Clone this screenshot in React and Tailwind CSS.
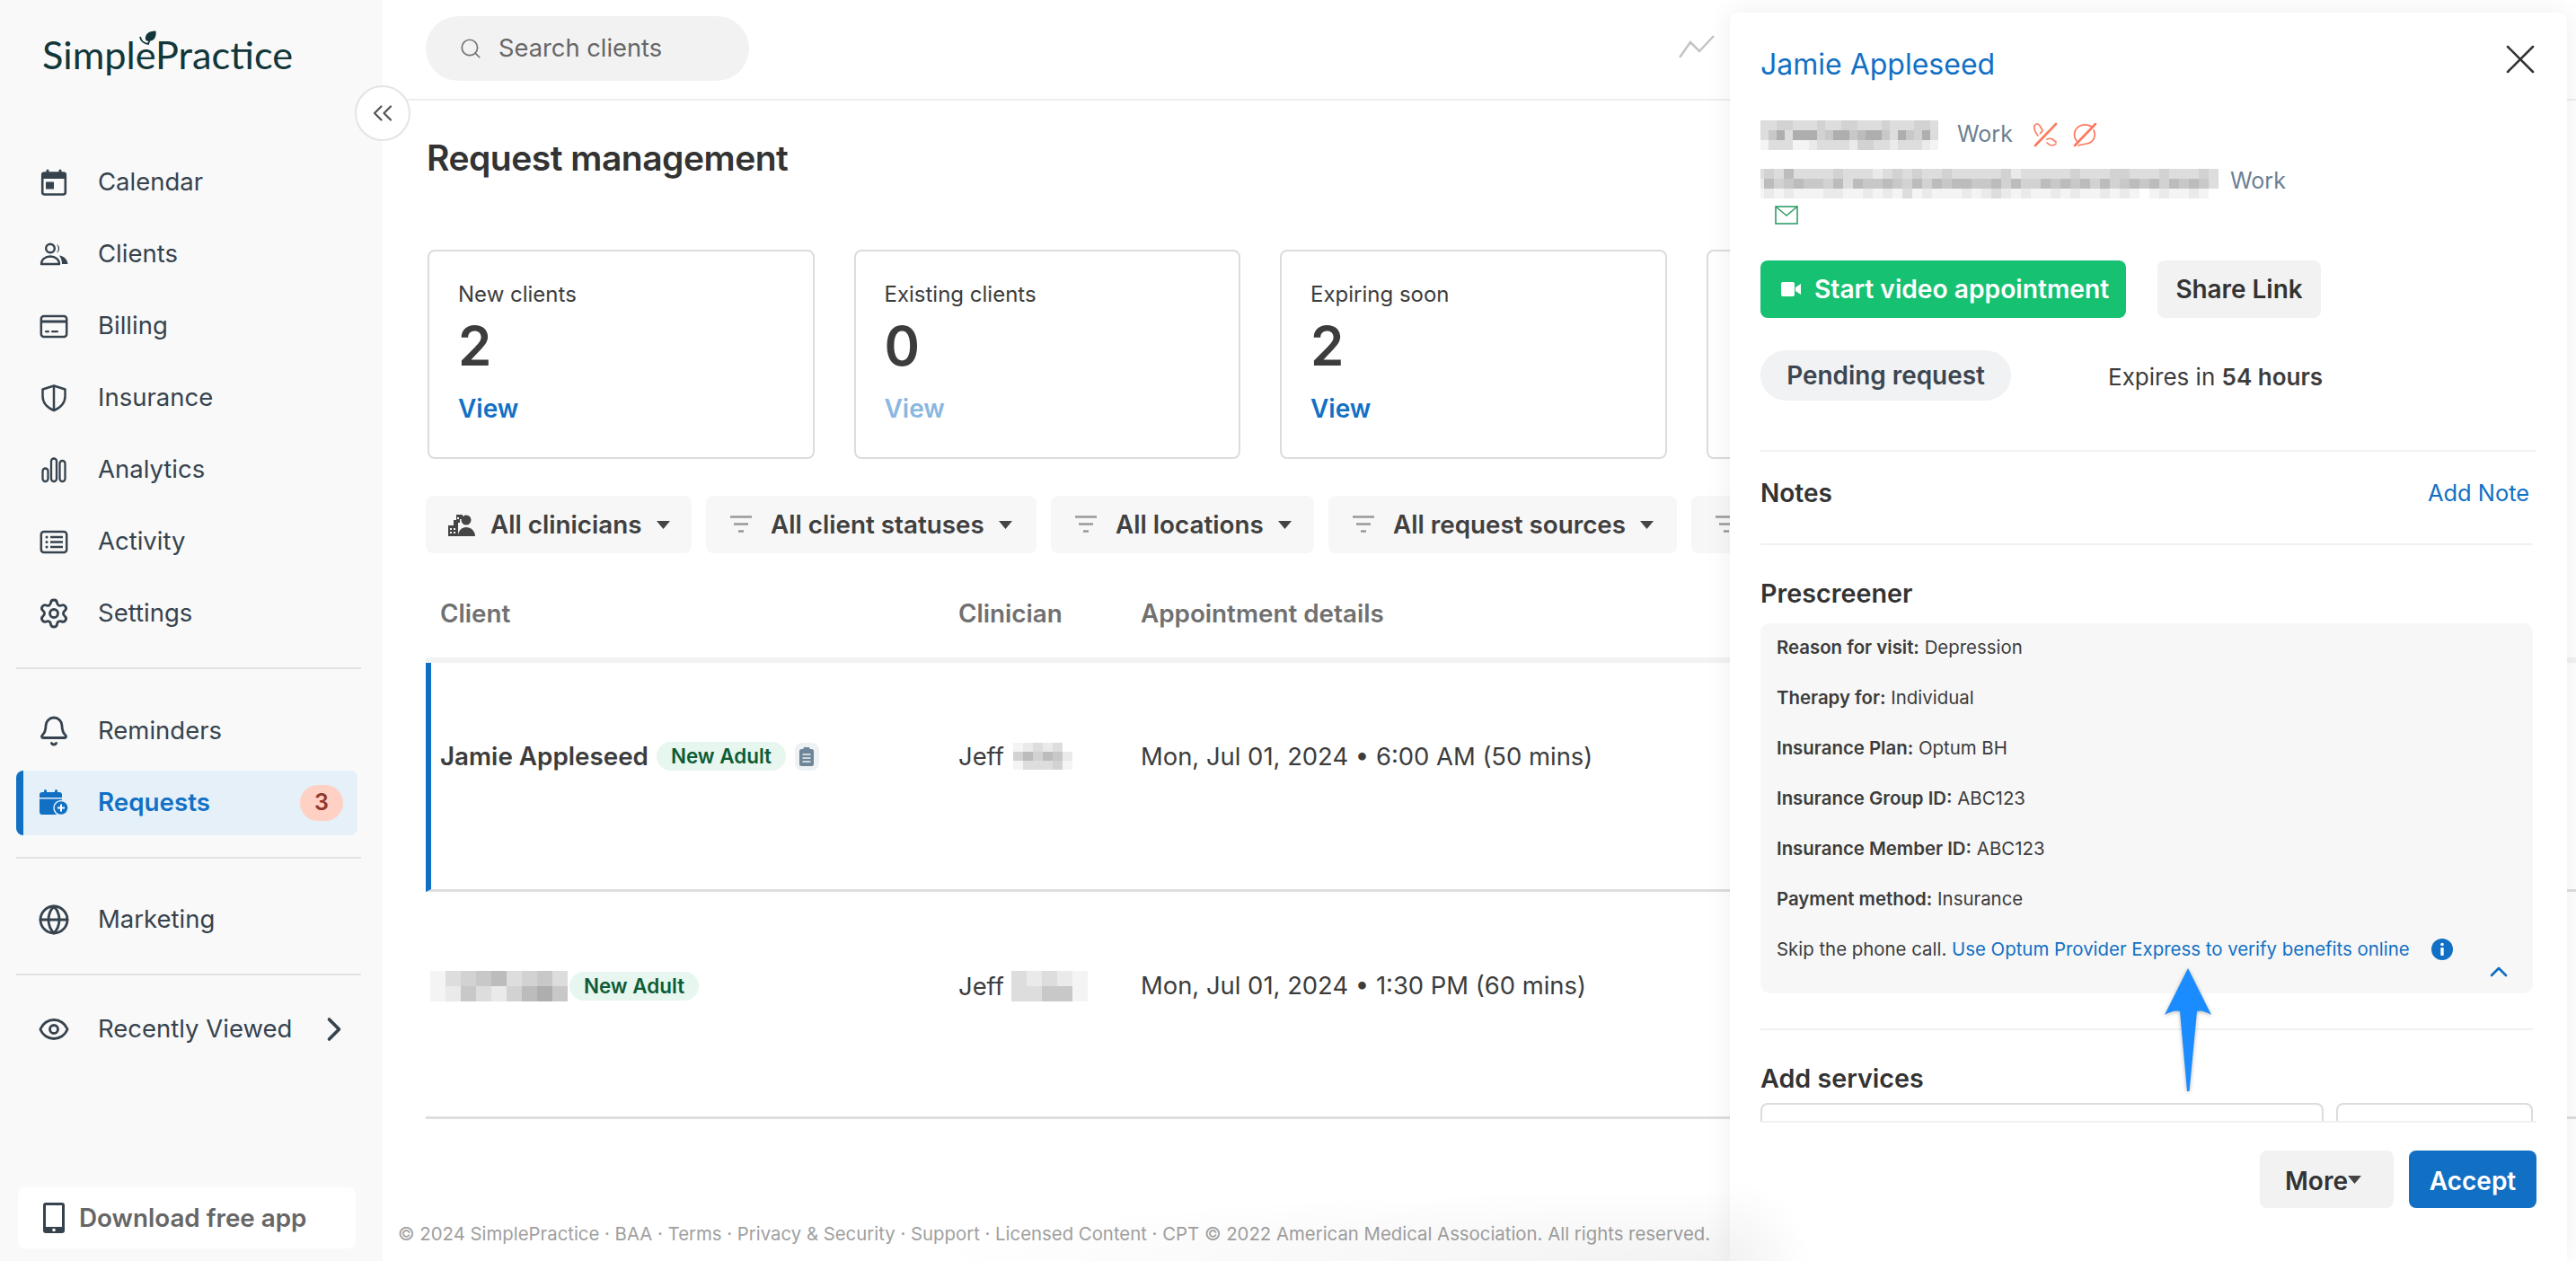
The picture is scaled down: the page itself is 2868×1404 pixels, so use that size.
import React from "react";
import { Settings, Bell, Globe, Eye, ChevronRight, ChevronsLeft, Search, X, ChevronUp } from "lucide-react";

const ink = "#36434e";

const Svg = ({ children, size = 32, className = "" }) => (
  <svg width={size} height={size} viewBox="0 0 32 32" fill="none" className={className}>{children}</svg>
);

const CalendarIcon = () => (
  <Svg>
    <rect x="3.2" y="5.5" width="25.6" height="24" rx="2.5" stroke={ink} strokeWidth="2.6" />
    <rect x="2" y="5" width="28" height="7" rx="2" fill={ink} />
    <rect x="7.5" y="1.5" width="3" height="6" rx="1.5" fill={ink} />
    <rect x="21.5" y="1.5" width="3" height="6" rx="1.5" fill={ink} />
    <rect x="7" y="15.5" width="9" height="8" rx="0.5" fill={ink} />
  </Svg>
);
const ClientsIcon = () => (
  <Svg>
    <circle cx="12" cy="9.5" r="4.8" stroke={ink} strokeWidth="2.4" />
    <path d="M2 27c0-5 4.200-8.500 10-8.500S22 22 22 27z" stroke={ink} strokeWidth="2.4" strokeLinejoin="round" />
    <path d="M19 5a5.200 5.200 0 0 1 0 9.500 7 7 0 0 0 0-9.500z" fill={ink} />
    <path d="M22 17.500c5 .5 9 4 9.500 9.500h-6.500c0-3.500-1-6.500-3-9.500z" fill={ink} />
  </Svg>
);
const BillingIcon = () => (
  <Svg>
    <rect x="1.800" y="5" width="28.400" height="23" rx="3" stroke={ink} strokeWidth="2.500" />
    <rect x="2" y="9.500" width="28" height="3" fill={ink} />
    <rect x="6" y="21" width="5" height="2.200" rx="1" fill={ink} />
    <rect x="13" y="21" width="8" height="2.200" rx="1" fill={ink} />
  </Svg>
);
const ShieldIcon = () => (
  <Svg>
    <path d="M16 2.500 28.500 6.500V14c0 7.500-5.500 13-12.500 16C9 27 3.500 21.500 3.500 14V6.500z" stroke={ink} strokeWidth="2.500" strokeLinejoin="round" />
    <path d="M16 3v27" stroke={ink} strokeWidth="2.500" />
  </Svg>
);
const AnalyticsIcon = () => (
  <Svg>
    <rect x="3.500" y="14.500" width="6" height="14.500" rx="3" stroke={ink} strokeWidth="2.300" />
    <rect x="13" y="3.500" width="6" height="25.500" rx="3" stroke={ink} strokeWidth="2.300" />
    <rect x="22.500" y="6" width="6" height="23" rx="3" stroke={ink} strokeWidth="2.300" />
  </Svg>
);
const ActivityIcon = () => (
  <Svg>
    <rect x="1.800" y="5" width="28.400" height="23" rx="3" stroke={ink} strokeWidth="2.500" />
    <circle cx="8" cy="11" r="1.500" fill={ink} /><circle cx="8" cy="16.500" r="1.500" fill={ink} /><circle cx="8" cy="22" r="1.500" fill={ink} />
    <path d="M12 11h14M12 16.500h14M12 22h14" stroke={ink} strokeWidth="2.400" />
  </Svg>
);
const RequestsIcon = () => (
  <svg width="32" height="32" viewBox="0 0 32 32" className="shrink-0">
    <rect x="0" y="4" width="25" height="25" rx="3" fill="#1270c4" />
    <rect x="0" y="10" width="25" height="1.500" fill="#e5f0f9" />
    <rect x="5" y="1" width="3" height="6" rx="1.500" fill="#1270c4" />
    <rect x="17" y="1" width="3" height="6" rx="1.500" fill="#1270c4" />
    <circle cx="24" cy="21.500" r="8" fill="#1270c4" stroke="#e5f0f9" strokeWidth="1.500" />
    <path d="M24 17.500v8M20 21.500h8" stroke="#fff" strokeWidth="2" />
  </svg>
);
const TabletIcon = () => (
  <svg width="24" height="34" viewBox="0 0 24 34" className="shrink-0">
    <rect width="24" height="34" rx="3" fill={ink} />
    <rect x="3" y="3" width="18" height="24" fill="#fff" />
    <circle cx="12" cy="30.500" r="1.800" fill="#fff" />
  </svg>
);
const Leaf = () => (
  <svg width="20" height="18" viewBox="0 0 20 18" className="absolute left-[108px] top-0">
    <path d="M7 10C6 4 11 0 18.500 0.500c.8 5-1 10-5.500 11-2.500 .5-5 .5-6-1.500z" fill="#12373a" />
    <path d="M1 7c1 5 5 8 10 8M10 15c1-2 1.500-3 1.500-5" stroke="#12373a" strokeWidth="1.800" fill="none" />
  </svg>
);
const FilterIcon = ({ className = "" }) => (
  <svg width="24" height="20" viewBox="0 0 24 20" className={className}>
    <path d="M0 1.500h24M4 9.500h16M9 17.500h6" stroke="#999" strokeWidth="2.600" />
  </svg>
);
const ClinicianIcon = () => (
  <svg width="30" height="26" viewBox="0 0 30 26">
    <path d="M0 14h6V8h3V2h7v5h-3v4h-2v15H0z" fill="#454545" />
    <path d="M2 17h2v2H2zM6 17h2v2H6zM2 21h2v2H2zM6 21h2v2H6zM10 5h2v2h-2z" fill="#f7f7f7" />
    <circle cx="20" cy="8" r="5.500" fill="#454545" />
    <path d="M11 26c0-6 4-10 9-10s10 4 10 10z" fill="#454545" />
  </svg>
);
const Caret = ({ className = "" }) => (
  <svg width="15" height="9" viewBox="0 0 15 9" className={className}><path d="M0 0h15L7.500 9z" fill="#444" /></svg>
);
const ClipboardIcon = () => (
  <span className="ml-[10px] flex h-[31px] w-[27px] items-center justify-center rounded-[8px] bg-[#eff2f5]">
    <svg width="16" height="21" viewBox="0 0 16 21">
      <rect y="2" width="16" height="19" rx="2.500" fill="#6f8598" />
      <rect x="4.500" y="0" width="7" height="4" rx="1" fill="#6f8598" />
      <path d="M3.500 8h9M3.500 12h9M3.500 16h9" stroke="#eff2f5" strokeWidth="1.600" />
    </svg>
  </span>
);
const VideoIcon = () => (
  <svg width="22" height="16" viewBox="0 0 22 16"><rect width="15" height="16" rx="2" fill="#fff" /><path d="M16 6l6-4v12l-6-4z" fill="#fff" /></svg>
);
const PhoneOffIcon = () => (
  <svg width="28" height="28" viewBox="0 0 28 28" fill="none" stroke="#fb7a5e">
    <path d="M2 4c2-3 4-3 6 0l3 5c.500 1.500-2 2.500-2.500 3.500M6 15C4 13 1 8 2 4M26 24c-3 3-7 2-10-1M16 19c2-1 4-1 6 0l4 3" strokeWidth="1.700" strokeLinecap="round" />
    <path d="M3 26 26 2" strokeWidth="2.600" strokeLinecap="round" />
  </svg>
);
const BubbleOffIcon = () => (
  <svg width="28" height="28" viewBox="0 0 28 28" fill="none" stroke="#fb7a5e">
    <path d="M6 22C1 17 1 8 9 4c5-2 11-1 14 2M24 9c3 6 0 14-8 15-3 .500-6 1-9 2" strokeWidth="1.700" strokeLinecap="round" />
    <path d="M3 26 26 2" strokeWidth="2.600" strokeLinecap="round" />
  </svg>
);
const MailIcon = () => (
  <svg width="26" height="21" viewBox="0 0 26 21" fill="none" stroke="#2f9e6a" strokeWidth="1.600">
    <rect x="1" y="1" width="24" height="19" />
    <path d="M1 1l12 10L25 1" />
  </svg>
);
const InfoIcon = () => (
  <svg width="24" height="24" viewBox="0 0 24 24">
    <circle cx="12" cy="12" r="12" fill="#1270c4" />
    <circle cx="12" cy="6.500" r="1.800" fill="#fff" />
    <rect x="10.300" y="10" width="3.400" height="9" rx="0.800" fill="#fff" />
  </svg>
);
const TrendIcon = () => (
  <svg width="40" height="26" viewBox="0 0 40 26" fill="none" stroke="#c4c4c4" strokeWidth="2.500" className="ml-[1035px] mt-[39px] shrink-0">
    <path d="M1 25 13 8l10 10L39 1" />
  </svg>
);

const shades = { 0: "#ffffff", 1: "#f4f4f4", 2: "#eaeaea", 3: "#dddddd", 4: "#d2d2d2", 5: "#c8c8c8", 6: "#bcbcbc", 7: "#aeaeae", 8: "#9e9e9e" };
const Mosaic = ({ rows, cw, ch, className = "" }) => (
  <svg width={rows[0].length * cw} height={rows.length * ch} className={className} shapeRendering="crispEdges">
    {rows.flatMap((row, y) => row.split("").map((c, x) => (
      <rect key={`${x}-${y}`} x={x * cw} y={y * ch} width={cw} height={ch} fill={shades[c]} />
    )))}
  </svg>
);

const NavItem = ({ icon, label, children }) => (
  <div className="flex h-[80px] items-center pl-[44px] pr-[32px] text-[27.500px] text-[#36434e]">
    <span className="flex w-[32px] justify-center">{icon}</span>
    <span className="ml-[33px] flex-1">{label}</span>
    {children}
  </div>
);

const Divider = ({ className = "" }) => <div className={`mx-[18px] h-[2px] w-[384px] bg-[#e2e2e2] ${className}`} />;

const StatCard = ({ label, value, disabled }) => (
  <div className="flex h-[233px] w-[430.500px] shrink-0 flex-col rounded-[8px] border-2 border-[#dcdcdc] pl-[32px] pt-[30px]">
    <div className="h-[36px] text-[24px] leading-[36px] text-[#3c3c3c]">{label}</div>
    <div className="mt-[3px] h-[72px] text-[60px] font-semibold leading-[72px] text-[#3c3c3c]">{value}</div>
    <div className={`mt-[14px] text-[28px] font-semibold leading-[40px] ${disabled ? "text-[#8ab7e1]" : "text-[#1270c4]"}`}>{value === "" ? "" : "View"}</div>
  </div>
);

const FilterBtn = ({ w, icon, label }) => (
  <div className={`flex h-[64px] shrink-0 items-center rounded-[8px] bg-[#f7f7f7] text-[27.800px] font-semibold text-[#404040] ${w}`}>
    {icon}
    <span className="pt-[2px]">{label}</span>
    <Caret className="ml-[16px]" />
  </div>
);

const Badge = ({ className = "" }) => (
  <span className={`inline-flex h-[32px] w-[144px] items-center justify-center rounded-full bg-[#e7f6ef] text-[22.400px] font-semibold text-[#0d5c36] ${className}`}>New Adult</span>
);

const Pre = ({ label, value }) => (
  <div className="text-[20.400px] leading-[32px] text-[#3c3c3c]"><span className="font-semibold">{label}</span> {value}</div>
);

export default function App() {
  return (
    <div className="relative flex h-[1404px] w-[2868px] overflow-hidden bg-white font-['Inter',sans-serif]">
      {/* Sidebar */}
      <aside className="flex h-full w-[426px] shrink-0 flex-col bg-[#f9f9f9]">
        <div className="relative ml-[47px] mt-[34px] h-[129px]">
          <div className="-mt-[2px] font-['Lato',sans-serif] text-[43.300px] leading-[56px] text-[#12373a]">SimplePractice</div>
          <Leaf />
        </div>
        <NavItem icon={<CalendarIcon />} label="Calendar" />
        <NavItem icon={<ClientsIcon />} label="Clients" />
        <NavItem icon={<BillingIcon />} label="Billing" />
        <NavItem icon={<ShieldIcon />} label="Insurance" />
        <NavItem icon={<AnalyticsIcon />} label="Analytics" />
        <NavItem icon={<ActivityIcon />} label="Activity" />
        <NavItem icon={<Settings size={36} color={ink} strokeWidth={1.900} className="shrink-0" />} label="Settings" />
        <Divider className="mt-[20px]" />
        <div className="h-[29px]" />
        <NavItem icon={<Bell size={36} color={ink} strokeWidth={1.900} className="shrink-0" />} label="Reminders" />
        <div className="mx-[18px] mt-[4px] flex h-[72px] w-[380px] items-center rounded-[8px] border-l-[8px] border-[#1270c4] bg-[#e5f0f9] pl-[18px] pr-[16px] text-[27.800px] font-semibold text-[#1270c4]">
          <RequestsIcon />
          <span className="ml-[33px] flex-1">Requests</span>
          <span className="flex h-[40px] w-[48px] items-center justify-center rounded-full bg-[#ffd0c4] text-[25px] font-semibold text-[#8f3a2b]">3</span>
        </div>
        <Divider className="mt-[24px]" />
        <div className="h-[28px]" />
        <NavItem icon={<Globe size={36} color={ink} strokeWidth={1.900} className="shrink-0" />} label="Marketing" />
        <Divider className="mt-[20px]" />
        <div className="h-[20px]" />
        <NavItem icon={<Eye size={36} color={ink} strokeWidth={1.900} className="shrink-0" />} label="Recently Viewed">
          <ChevronRight size={44} color={ink} strokeWidth={2} className="shrink-0" />
        </NavItem>
        <div className="mb-[14px] ml-[20px] mt-auto flex h-[68px] w-[376px] items-center rounded-[8px] bg-white pl-[28px]">
          <TabletIcon />
          <span className="ml-[16px] pt-[2px] text-[27.800px] font-semibold text-[#666666]">Download free app</span>
        </div>
      </aside>

      {/* Main */}
      <main className="flex h-full min-w-0 flex-1 flex-col">
        <div className="flex h-[112px] shrink-0 items-start border-b-2 border-[#eeeeee] pl-[48px]">
          <div className="mt-[18px] flex h-[72px] w-[360px] shrink-0 items-center rounded-full bg-[#f2f2f2] pl-[37px] text-[27.300px] text-[#666666]">
            <Search size={26} color="#777777" strokeWidth={1.600} />
            <span className="ml-[18px]">Search clients</span>
          </div>
          <TrendIcon />
        </div>
        <div className="flex-1 overflow-hidden pl-[48px]">
          <h1 className="ml-[1px] mt-[40px] text-[39px] font-semibold leading-[48px] tracking-[-0.5px] text-[#333333]">Request management</h1>
          <div className="ml-[2px] mt-[78px] flex gap-[44px]">
            <StatCard label="New clients" value="2" />
            <StatCard label="Existing clients" value="0" disabled />
            <StatCard label="Expiring soon" value="2" />
            <StatCard label="" value="" />
          </div>
          <div className="mt-[41px] flex gap-[16px]">
            <FilterBtn w="w-[296px] pl-[25px]" icon={<span className="mr-[17px]"><ClinicianIcon /></span>} label="All clinicians" />
            <FilterBtn w="w-[368px] pl-[27px]" icon={<FilterIcon className="mr-[21px]" />} label="All client statuses" />
            <FilterBtn w="w-[293px] pl-[27px]" icon={<FilterIcon className="mr-[21px]" />} label="All locations" />
            <FilterBtn w="w-[388px] pl-[27px]" icon={<FilterIcon className="mr-[21px]" />} label="All request sources" />
            <FilterBtn w="w-[200px] pl-[27px]" icon={<FilterIcon className="mr-[21px]" />} label="" />
          </div>
          <div className="flex pb-[29px] pl-[16px] pt-[47px] text-[27.800px] font-semibold leading-[40px] text-[#707070]">
            <span className="w-[577px]">Client</span>
            <span className="w-[203px]">Clinician</span>
            <span>Appointment details</span>
          </div>
          <div className="h-[6px] bg-[#f2f2f2]" />
          <div className="flex h-[255px] items-start border-b-[3px] border-l-[6px] border-[#dedede] border-l-[#1270c4] pl-[10px] pt-[88px] text-[27.400px] leading-[32px] text-[#3c3c3c]">
            <div className="flex w-[577px] items-center">
              <span className="text-[27.800px] font-semibold">Jamie Appleseed</span>
              <Badge className="ml-[9px]" />
              <ClipboardIcon />
            </div>
            <div className="flex w-[203px] items-center"><span>Jeff</span>
              <Mosaic className="ml-[10px]" cw={11} ch={10} rows={["1232300", "4646520", "1333410"]} />
            </div>
            <span>Mon, Jul 01, 2024 • 6:00 AM (50 mins)</span>
          </div>
          <div className="flex h-[253px] items-start border-b-[3px] border-[#dedede] pl-[5px] pt-[88px] text-[27.400px] leading-[32px] text-[#3c3c3c]">
            <div className="flex w-[588px] items-center">
              <Mosaic cw={17} ch={17} rows={["134563453", "125324675"]} />
              <Badge className="ml-[2px]" />
            </div>
            <div className="flex w-[203px] items-center"><span>Jeff</span>
              <Mosaic className="ml-[8px]" cw={17} ch={17} rows={["32321", "33551"]} />
            </div>
            <span>Mon, Jul 01, 2024 • 1:30 PM (60 mins)</span>
          </div>
        </div>
        <div className="whitespace-nowrap pb-[18px] pl-[17px] text-[20.350px] leading-[24px] text-[#a0a0a0]">© 2024 SimplePractice · BAA · Terms · Privacy &amp; Security · Support · Licensed Content · CPT © 2022 American Medical Association. All rights reserved.</div>
      </main>

      {/* Collapse button */}
      <button className="absolute left-[395px] top-[95px] flex h-[62px] w-[62px] items-center justify-center rounded-full border-2 border-[#e4e4e4] bg-white">
        <ChevronsLeft size={36} color="#555555" strokeWidth={1.500} />
      </button>

      {/* Soft shade under the panel */}
      <div className="pointer-events-none absolute bottom-0 left-[1000px] h-[90px] w-[926px] bg-[radial-gradient(ellipse_900px_80px_at_right_bottom,rgba(0,0,0,0.05),transparent)]" />

      {/* Panel */}
      <section className="absolute left-[1926px] top-[14px] flex h-[1390px] w-[932px] flex-col rounded-t-[10px] bg-white px-[34px] shadow-[0_0_30px_rgba(0,0,0,0.07)]">
        <div className="flex-1 overflow-hidden">
          <div className="flex h-[78px] items-start justify-between pt-[38px]">
            <span className="text-[32px] leading-[40px] text-[#1270c4]">Jamie Appleseed</span>
          </div>
          <div className="mt-[41px] flex h-[34px] items-center">
            <Mosaic cw={9} ch={11} rows={["3344333433443334333443", "3573777457756775375473", "1333112333324433233321"]} />
            <span className="ml-[21px] text-[25px] text-[#6b8092]">Work</span>
            <span className="ml-[22px]"><PhoneOffIcon /></span>
            <span className="ml-[16px]"><BubbleOffIcon /></span>
          </div>
          <div className="-ml-[7px] mt-[21px] flex h-[33px] items-center">
            <Mosaic cw={11} ch={11} rows={["34363333433323434334333334233333433344333433343", "26456554636556546465665564644656564645656465653", "12121112211212131211121232121121211212101211210"]} />
            <span className="mb-[6px] ml-[13px] text-[25px] text-[#6b8092]">Work</span>
          </div>
          <div className="ml-[16px] mt-[8px]"><MailIcon /></div>
          <div className="mt-[40px] flex gap-[35px]">
            <button className="flex h-[64px] w-[407px] items-center rounded-[8px] bg-[#16c172] pl-[23px] text-[28.200px] font-semibold text-white">
              <VideoIcon /><span className="ml-[15px]">Start video appointment</span>
            </button>
            <button className="h-[64px] w-[182px] rounded-[8px] bg-[#f2f2f2] pt-[2px] text-[27.900px] font-semibold text-[#333333]">Share Link</button>
          </div>
          <div className="mt-[36px] flex items-center">
            <span className="flex h-[56px] w-[279px] items-center justify-center rounded-full bg-[#f1f2f4] pt-[2px] text-[27.900px] font-semibold text-[#3c4650]">Pending request</span>
            <span className="ml-[108px] pt-[2px] text-[26px] text-[#3c3c3c]">Expires in <span className="font-semibold">54 hours</span></span>
          </div>
          <div className="mt-[55px] h-[2px] bg-[#f1f1f1]" />
          <div className="mb-[12px] flex h-[90px] w-[860px] items-center justify-between pr-[4px] pt-[2px]">
            <span className="text-[28px] font-semibold text-[#333333]">Notes</span>
            <span className="text-[25.400px] text-[#1270c4]">Add Note</span>
          </div>
          <div className="h-[2px] w-[860px] bg-[#f1f1f1]" />
          <div className="mt-[34px] text-[28.700px] font-semibold leading-[40px] text-[#333333]">Prescreener</div>
          <div className="mt-[13px] flex h-[412px] w-[860px] flex-col gap-[24px] rounded-[10px] bg-[#f7f7f7] pl-[18px] pt-[11px]">
            <Pre label="Reason for visit:" value="Depression" />
            <Pre label="Therapy for:" value="Individual" />
            <Pre label="Insurance Plan:" value="Optum BH" />
            <Pre label="Insurance Group ID:" value="ABC123" />
            <Pre label="Insurance Member ID:" value="ABC123" />
            <Pre label="Payment method:" value="Insurance" />
            <div className="relative flex items-center text-[20.400px] leading-[32px] text-[#3c3c3c]">
              <span>Skip the phone call.&nbsp;</span>
              <span className="text-[#1270c4]">Use Optum Provider Express to verify benefits online</span>
              <span className="ml-[24px]"><InfoIcon /></span>
              <ChevronUp size={32} color="#1270c4" strokeWidth={2} className="absolute left-[788px] top-[25px]" />
            </div>
          </div>
          <div className="mt-[39px] h-[2px] w-[860px] bg-[#f1f1f1]" />
          <div className="mt-[34px] text-[28.700px] font-semibold leading-[40px] text-[#333333]">Add services</div>
          <div className="mt-[7px] flex w-[860px] gap-[14px]">
            <div className="h-[60px] w-[627px] rounded-[8px] border-2 border-[#dcdcdc]" />
            <div className="h-[60px] w-[219px] rounded-[8px] border-2 border-[#dcdcdc]" />
          </div>
        </div>
        <div className="flex h-[156px] shrink-0 justify-end gap-[17px] border-t-2 border-[#f1f1f1] pt-[31px]">
          <button className="flex h-[64px] w-[149px] items-center justify-center rounded-[8px] bg-[#f2f2f2] pr-[8px] pt-[3px] text-[28px] font-semibold text-[#333333]">More<Caret className="mt-[-2px]" /></button>
          <button className="h-[64px] w-[142px] rounded-[8px] bg-[#1270c4] pt-[3px] text-[28px] font-semibold text-white">Accept</button>
        </div>
        <X size={56} color="#333333" strokeWidth={1.100} className="absolute left-[852px] top-[24px]" />
        <svg width="52" height="138" viewBox="0 0 52 138" className="absolute left-[484px] top-[1064px] drop-shadow-[0_1px_2px_rgba(0,0,0,0.3)]">
          <path d="M26 0 52 52Q42 46 36 48L27.500 137H25L17 48Q10 46 0 52Z" fill="#1a8cff" />
        </svg>
        <div className="pointer-events-none absolute bottom-0 left-0 h-[90px] w-[90px] bg-[radial-gradient(ellipse_90px_90px_at_left_bottom,rgba(0,0,0,0.05),transparent)]" />
      </section>
    </div>
  );
}
